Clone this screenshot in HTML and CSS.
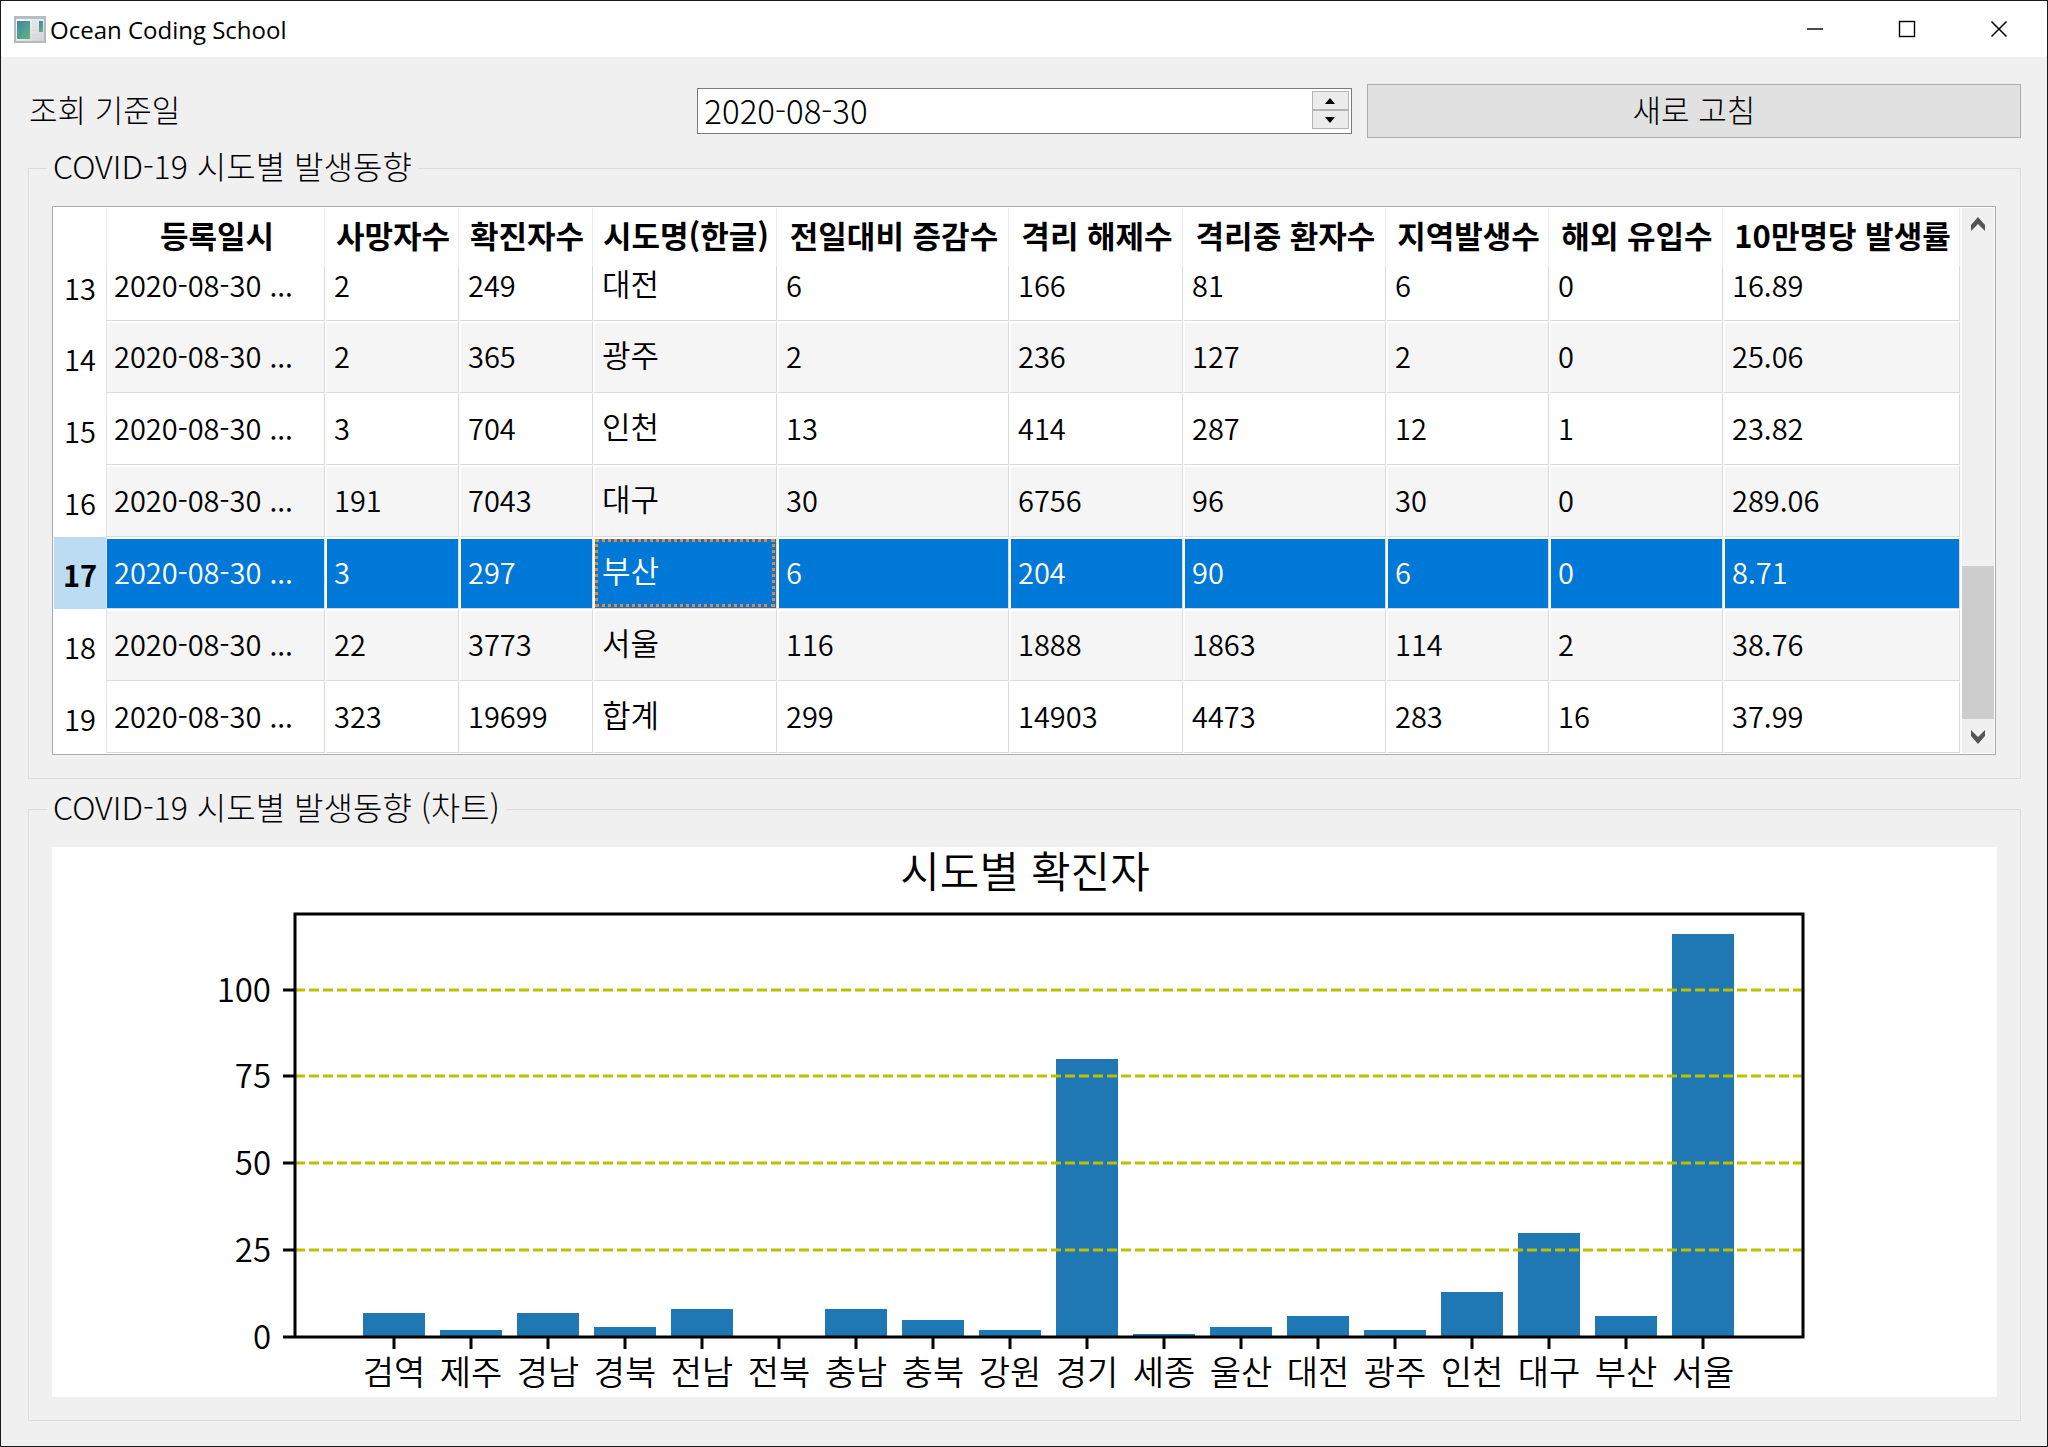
FILE: index.html
```html
<!DOCTYPE html>
<html lang="ko">
<head>
<meta charset="utf-8">
<meta name="viewport" content="width=device-width, initial-scale=1">
<title>Ocean Coding School</title>
<link rel="stylesheet" href="styles.css">
</head>
<body>
<div class="window">
  <header class="titlebar">
    <svg class="app-icon" width="32" height="27" viewBox="0 0 32 27" aria-hidden="true">
      <defs>
        <linearGradient id="screen" x1="0" y1="0" x2="1" y2="1">
          <stop offset="0" stop-color="#4583ac"/><stop offset="1" stop-color="#5fb878"/>
        </linearGradient>
        <linearGradient id="frame" x1="0" y1="0" x2="1" y2="1">
          <stop offset="0" stop-color="#ffffff"/><stop offset="1" stop-color="#cdd0d3"/>
        </linearGradient>
      </defs>
      <rect x="1" y="1" width="30" height="25" fill="url(#frame)" stroke="#b4b9be" stroke-width="2"/>
      <rect x="1" y="0" width="30" height="3" fill="#b4bcc6"/>
      <rect x="3" y="5" width="13" height="18" fill="url(#screen)"/>
      <path d="M18 5h5M18 8h5M18 11h5M18 14h5M18 19h5M18 22h5" stroke="#d3d6d9" stroke-width="1"/>
      <rect x="25" y="5" width="4" height="11" fill="url(#screen)"/>
    </svg>
    <h1 class="title">Ocean Coding School</h1>
    <div class="window-controls">
      <button type="button" class="window-button" aria-label="최소화"><svg width="18" height="18" viewBox="0 0 18 18"><path d="M1 9h16" stroke="#000" stroke-width="1.4"/></svg></button>
      <button type="button" class="window-button" aria-label="최대화"><svg width="18" height="18" viewBox="0 0 18 18"><rect x="1.5" y="1.5" width="15" height="15" fill="none" stroke="#000" stroke-width="1.4"/></svg></button>
      <button type="button" class="window-button" aria-label="닫기"><svg width="18" height="18" viewBox="0 0 18 18"><path d="M1.500 1.500l15 15M16.500 1.500l-15 15" stroke="#000" stroke-width="1.500"/></svg></button>
    </div>
  </header>

  <main class="content">
    <div class="query">
      <label class="query-label" for="base-date">조회 기준일</label>
      <div class="date-edit">
        <input class="date-input" id="base-date" type="text" value="2020-08-30">
        <div class="spin">
          <button type="button" class="spin-button" aria-label="증가"><svg width="10" height="6" viewBox="0 0 10 6"><path d="M0 6L5 0L10 6z"/></svg></button>
          <button type="button" class="spin-button" aria-label="감소"><svg width="10" height="6" viewBox="0 0 10 6"><path d="M0 0L5 6L10 0z"/></svg></button>
        </div>
      </div>
      <button type="button" class="refresh">새로 고침</button>
    </div>

    <fieldset class="group">
      <legend class="group-title">COVID-19 시도별 발생동향</legend>
      <div class="table-view">
        <table class="grid">
          <colgroup>
            <col class="c-index"><col class="c-date"><col class="c-small"><col class="c-small"><col class="c-name">
            <col class="c-diff"><col class="c-mid"><col class="c-isolated"><col class="c-local"><col class="c-mid"><col class="c-rate">
          </colgroup>
          <thead>
            <tr><td></td><th scope="col">등록일시</th><th scope="col">사망자수</th><th scope="col">확진자수</th><th scope="col">시도명(한글)</th><th scope="col">전일대비 증감수</th><th scope="col">격리 해제수</th><th scope="col">격리중 환자수</th><th scope="col">지역발생수</th><th scope="col">해외 유입수</th><th scope="col">10만명당 발생률</th></tr>
          </thead>
          <tbody>
            <tr class="clipped"><th scope="row">13</th><td>2020-08-30 ...</td><td>2</td><td>249</td><td class="name">대전</td><td>6</td><td>166</td><td>81</td><td>6</td><td>0</td><td>16.89</td></tr>
            <tr class="alt"><th scope="row">14</th><td>2020-08-30 ...</td><td>2</td><td>365</td><td class="name">광주</td><td>2</td><td>236</td><td>127</td><td>2</td><td>0</td><td>25.06</td></tr>
            <tr><th scope="row">15</th><td>2020-08-30 ...</td><td>3</td><td>704</td><td class="name">인천</td><td>13</td><td>414</td><td>287</td><td>12</td><td>1</td><td>23.82</td></tr>
            <tr class="alt"><th scope="row">16</th><td>2020-08-30 ...</td><td>191</td><td>7043</td><td class="name">대구</td><td>30</td><td>6756</td><td>96</td><td>30</td><td>0</td><td>289.06</td></tr>
            <tr class="selected"><th scope="row">17</th><td>2020-08-30 ...</td><td>3</td><td>297</td><td class="name current">부산</td><td>6</td><td>204</td><td>90</td><td>6</td><td>0</td><td>8.71</td></tr>
            <tr class="alt"><th scope="row">18</th><td>2020-08-30 ...</td><td>22</td><td>3773</td><td class="name">서울</td><td>116</td><td>1888</td><td>1863</td><td>114</td><td>2</td><td>38.76</td></tr>
            <tr><th scope="row">19</th><td>2020-08-30 ...</td><td>323</td><td>19699</td><td class="name">합계</td><td>299</td><td>14903</td><td>4473</td><td>283</td><td>16</td><td>37.99</td></tr>
          </tbody>
        </table>
        <div class="scrollbar">
          <button type="button" class="scroll-button" aria-label="위로"><svg width="16" height="16" viewBox="0 0 16 16"><path d="M1 14V8L8 0l7 8v6L8 7z"/></svg></button>
          <div class="scroll-track"><div class="scroll-thumb"></div></div>
          <button type="button" class="scroll-button" aria-label="아래로"><svg width="16" height="16" viewBox="0 0 16 16"><path d="M1 2v6l7 8 7-8V2L8 9z"/></svg></button>
        </div>
      </div>
    </fieldset>

    <fieldset class="group">
      <legend class="group-title">COVID-19 시도별 발생동향 (차트)</legend>
      <svg class="chart" viewBox="0 0 1945 550" role="img" aria-label="시도별 확진자">
        <text class="chart-title" x="973" y="41">시도별 확진자</text>
        <g class="bars">
          <rect x="311" y="466" width="62" height="24"/>
          <rect x="388" y="483" width="62" height="7"/>
          <rect x="465" y="466" width="62" height="24"/>
          <rect x="542" y="480" width="62" height="10"/>
          <rect x="619" y="462" width="62" height="28"/>
          <rect x="773" y="462" width="62" height="28"/>
          <rect x="850" y="473" width="62" height="17"/>
          <rect x="927" y="483" width="62" height="7"/>
          <rect x="1004" y="212" width="62" height="278"/>
          <rect x="1081" y="487" width="62" height="3"/>
          <rect x="1158" y="480" width="62" height="10"/>
          <rect x="1235" y="469" width="62" height="21"/>
          <rect x="1312" y="483" width="62" height="7"/>
          <rect x="1389" y="445" width="62" height="45"/>
          <rect x="1466" y="386" width="62" height="104"/>
          <rect x="1543" y="469" width="62" height="21"/>
          <rect x="1620" y="87" width="62" height="403"/>
        </g>
        <path class="gridlines" d="M243 143H1751M243 229H1751M243 316H1751M243 403H1751"/>
        <path class="axes" d="M243 67H1751V490H243z M231 143h12M231 229h12M231 316h12M231 403h12M231 490h12"/>
        <path class="axes" d="M342 490v12M419 490v12M496 490v12M573 490v12M650 490v12M727 490v12M804 490v12M881 490v12M958 490v12M1035 490v12M1112 490v12M1189 490v12M1266 490v12M1343 490v12M1420 490v12M1497 490v12M1574 490v12M1651 490v12"/>
        <g class="y-labels">
          <text x="219" y="155">100</text><text x="219" y="241">75</text><text x="219" y="328">50</text><text x="219" y="415">25</text><text x="219" y="502">0</text>
        </g>
        <g class="x-labels">
          <text x="342" y="538">검역</text><text x="419" y="538">제주</text><text x="496" y="538">경남</text><text x="573" y="538">경북</text><text x="650" y="538">전남</text><text x="727" y="538">전북</text><text x="804" y="538">충남</text><text x="881" y="538">충북</text><text x="958" y="538">강원</text><text x="1035" y="538">경기</text><text x="1112" y="538">세종</text><text x="1189" y="538">울산</text><text x="1266" y="538">대전</text><text x="1343" y="538">광주</text><text x="1420" y="538">인천</text><text x="1497" y="538">대구</text><text x="1574" y="538">부산</text><text x="1651" y="538">서울</text>
        </g>
      </svg>
    </fieldset>
  </main>
</div>
</body>
</html>
```
FILE: styles.css
```css
* { box-sizing: border-box; }

body {
  margin: 0;
  background: #f0f0f0;
  color: #000;
  font-family: "Noto Sans CJK KR", sans-serif;
  font-weight: 300;
  font-size: 29px;
}

button, input { font: inherit; color: inherit; margin: 0; }

.window {
  min-height: 100vh;
  border: 1px solid #1a1a1a;
}

.titlebar {
  display: flex;
  align-items: center;
  height: 56px;
  padding: 0 2px 0 13px;
  background: #fff;
}

.title {
  flex: 1;
  margin: 0;
  padding-left: 4px;
  font-family: "Open Sans", "Noto Sans CJK KR", sans-serif;
  font-size: 24px;
  font-weight: 400;
}

.window-controls { display: flex; height: 100%; }

.window-button {
  display: flex;
  align-items: center;
  justify-content: center;
  width: 92px;
  padding: 0;
  border: 0;
  background: none;
}

.content { padding: 27px 26px 0 27px; }

.query {
  display: grid;
  grid-template-columns: repeat(3, 1fr);
  gap: 15px;
  align-items: center;
}

.query-label {
  padding: 0 0 4px 1px;
  font-size: 31px;
  line-height: 50px;
}

.date-edit {
  display: flex;
  height: 46px;
  padding: 2px;
  border: 1px solid #7a7a7a;
  background: #fff;
}

.date-input {
  flex: 1;
  min-width: 0;
  padding: 0 4px 2px;
  border: 0;
  outline: 0;
  background: none;
  font-size: 33px;
}

.spin { display: flex; flex-direction: column; width: 37px; height: 38px; }

.spin-button {
  display: flex;
  flex: 1;
  align-items: center;
  justify-content: center;
  padding: 0;
  border: 1px solid #b4b4b4;
  background: #ececec;
}

.refresh {
  height: 54px;
  padding: 0 0 4px;
  border: 1px solid #adadad;
  background: #e1e1e1;
  font-size: 31px;
  line-height: 48px;
}

.group {
  min-width: 0;
  margin: 8px 0 0;
  padding: 16px 23px 23px;
  border: 1px solid #dcdcdc;
}

.group-title {
  margin-left: -5px;
  padding: 0 6px 5px;
  font-size: 32px;
  line-height: 39px;
}

.table-view {
  display: flex;
  margin-right: 1px;
  padding: 1px;
  border: 1px solid #a8abb0;
  background: #fff;
}

.grid {
  flex: 1;
  min-width: 0;
  table-layout: fixed;
  border-spacing: 0;
  font-weight: 350;
  line-height: 30px;
}

.c-index { width: 53px; }
.c-date { width: 218px; }
.c-small { width: 134px; }
.c-name { width: 184px; }
.c-diff { width: 232px; }
.c-mid { width: 174px; }
.c-isolated { width: 203px; }
.c-local { width: 163px; }
.c-rate { width: 237px; }

.grid th, .grid td { padding: 0; white-space: nowrap; }

.grid thead th, .grid thead td {
  height: 57px;
  padding: 0 0 4px 3px;
  border-right: 1px solid #ececec;
  font-size: 31px;
  font-weight: 700;
}

.grid tbody th {
  padding-top: 2px;
  border-right: 1px solid #e4e4e4;
  font-weight: 350;
}

.grid tbody td {
  height: 72px;
  padding: 0 0 5px 7px;
  border: solid #dadada;
  border-width: 2px 1px 1px 2px;
  border-top-color: #fff;
  border-left-color: #fff;
  text-align: left;
}

.grid tbody th + td { border-left: 0; }
.grid tbody .name { padding-bottom: 8px; font-size: 31px; }

.grid tbody .clipped td { height: 56px; padding-bottom: 19px; }
.grid tbody .clipped .name { padding-bottom: 21px; }
.grid tbody .clipped th { padding: 0 0 12px; }
.grid .alt td { background: #f5f5f5; }
.grid .selected td { background: #0078d7; color: #fff; }
.grid tbody .selected th { background: #bcdcf4; font-weight: 700; }
.grid .current { outline: 3px dotted #ff8020; outline-offset: -5px; }

.scrollbar {
  display: flex;
  flex-direction: column;
  width: 32px;
  margin-left: 2px;
  background: #f0f0f0;
}

.scroll-button {
  display: flex;
  align-items: center;
  justify-content: center;
  height: 34px;
  padding: 0;
  border: 0;
  background: none;
  fill: #555;
}

.scroll-track { display: flex; flex: 1; align-items: flex-end; }
.scroll-thumb { width: 100%; height: 32%; background: #cdcdcd; }

.chart { display: block; width: 100%; overflow: visible; background: #fff; }
.chart text { fill: #000; font-weight: 350; text-anchor: middle; }
.chart .chart-title { font-size: 43px; }
.bars { fill: #1f77b4; }
.gridlines { fill: none; stroke: #bfbf00; stroke-width: 3; stroke-dasharray: 10 4; }
.axes { fill: none; stroke: #000; stroke-width: 3; }
.y-labels { font-size: 33px; }
.chart .y-labels text { text-anchor: end; }
.x-labels { font-size: 34px; }
```
